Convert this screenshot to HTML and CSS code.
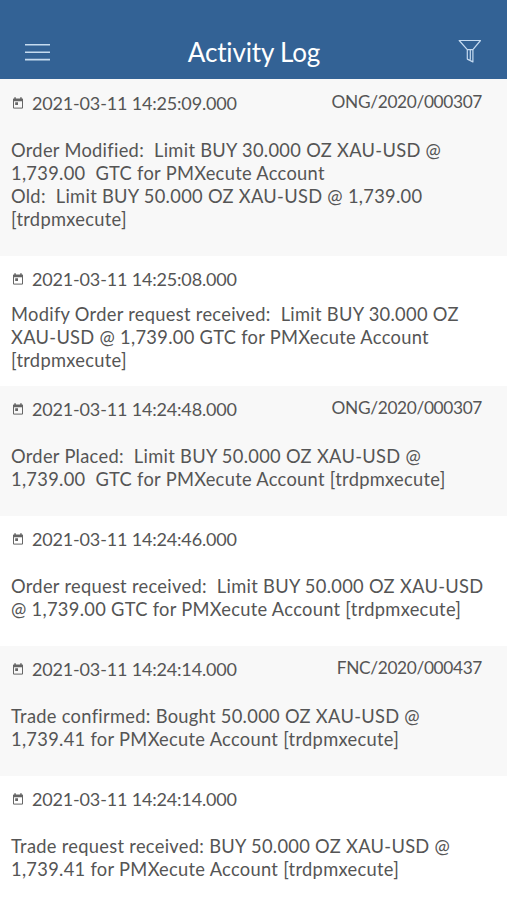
FILE: index.html
```html
<!DOCTYPE html>
<html lang="en">
<head>
    <meta charset="UTF-8">
    <meta name="viewport" content="width=device-width, initial-scale=1.0">
    <title>Activity Log</title>
    <link rel="stylesheet" href="styles.css">
</head>
<body>
    <svg class="icon-defs" width="0" height="0">
        <symbol id="calendar" viewBox="0 0 12 12">
            <path d="M1.5 2.2h9v8.9h-9z" fill="none" stroke="currentColor" stroke-width="1"/>
            <path d="M1 1.8h10v2.4H1zM2.3 .3h1.5V2H2.3zM8.2 .3h1.5V2H8.2zM3.2 5.3h2.8v2.8H3.2z" fill="currentColor"/>
        </symbol>
    </svg>
    <header class="header">
        <button class="menu-btn" aria-label="Menu">
            <svg width="26" height="20" viewBox="0 0 26 20" stroke="currentColor" stroke-width="1.6">
                <path d="M1 2.7h25M1 10.2h25M1 17.6h25"/>
            </svg>
        </button>
        <h1>Activity Log</h1>
        <button class="filter-btn" aria-label="Filter">
            <svg width="24" height="25" viewBox="0 0 24 25" fill="none" stroke="currentColor" stroke-width="1.2" stroke-linejoin="round">
                <path d="M1.2 1.5h21.3l-7.6 9.2v12.2l-5.6-2.8v-9.4zM9.3 10.7h5.6M12.3 10.7v10"/>
            </svg>
        </button>
    </header>
    <main class="log">
        <article class="entry first">
            <div class="entry-top">
                <svg class="calendar"><use href="#calendar"/></svg>
                <time>2021-03-11 14:25:09.000</time>
                <span class="ref">ONG/2020/000307</span>
            </div>
            <p>Order Modified:  Limit BUY 30.000 OZ XAU-USD @
1,739.00  GTC for PMXecute Account
Old:  Limit BUY 50.000 OZ XAU-USD @ 1,739.00
[trdpmxecute]</p>
        </article>
        <article class="entry compact">
            <div class="entry-top">
                <svg class="calendar"><use href="#calendar"/></svg>
                <time>2021-03-11 14:25:08.000</time>
            </div>
            <p>Modify Order request received:  Limit BUY 30.000 OZ
XAU-USD @ 1,739.00 GTC for PMXecute Account
[trdpmxecute]</p>
        </article>
        <article class="entry">
            <div class="entry-top">
                <svg class="calendar"><use href="#calendar"/></svg>
                <time>2021-03-11 14:24:48.000</time>
                <span class="ref">ONG/2020/000307</span>
            </div>
            <p>Order Placed:  Limit BUY 50.000 OZ XAU-USD @
1,739.00  GTC for PMXecute Account [trdpmxecute]</p>
        </article>
        <article class="entry">
            <div class="entry-top">
                <svg class="calendar"><use href="#calendar"/></svg>
                <time>2021-03-11 14:24:46.000</time>
            </div>
            <p>Order request received:  Limit BUY 50.000 OZ XAU-USD
@ 1,739.00 GTC for PMXecute Account [trdpmxecute]</p>
        </article>
        <article class="entry">
            <div class="entry-top">
                <svg class="calendar"><use href="#calendar"/></svg>
                <time>2021-03-11 14:24:14.000</time>
                <span class="ref">FNC/2020/000437</span>
            </div>
            <p>Trade confirmed: Bought 50.000 OZ XAU-USD @
1,739.41 for PMXecute Account [trdpmxecute]</p>
        </article>
        <article class="entry">
            <div class="entry-top">
                <svg class="calendar"><use href="#calendar"/></svg>
                <time>2021-03-11 14:24:14.000</time>
            </div>
            <p>Trade request received: BUY 50.000 OZ XAU-USD @
1,739.41 for PMXecute Account [trdpmxecute]</p>
        </article>
    </main>
</body>
</html>
```
FILE: styles.css
```css
* {
    box-sizing: border-box;
}

body {
    margin: 0;
    height: 900px;
    overflow: hidden;
    background: #fff;
    color: #555;
    font-family: Lato, "Liberation Sans", sans-serif;
    font-size: 18px;
    line-height: 23px;
}

.icon-defs {
    position: absolute;
}

.header {
    height: 79px;
    padding: 24px 25px 0 24px;
    display: flex;
    justify-content: space-between;
    align-items: center;
    background: #336295;
    color: #fff;
}

.header h1 {
    margin: 0;
    font-size: 26px;
    font-weight: 400;
    line-height: 32px;
    letter-spacing: -0.15px;
}

.header button {
    padding: 0;
    border: none;
    background: none;
    color: #c6dbf0;
}

.header svg {
    display: block;
}

.menu-btn {
    width: 26px;
}

.filter-btn {
    width: 24px;
    height: 25px;
}

.entry {
    height: 130px;
    padding: 12px 25px 0 11px;
}

.entry:nth-child(odd) {
    background: #f8f8f8;
}

.entry.first {
    height: 177px;
    padding-top: 13px;
}

.entry-top {
    height: 23px;
    display: flex;
    align-items: center;
}

.entry time {
    letter-spacing: -0.17px;
}

.calendar {
    width: 12px;
    height: 12px;
    margin: -1px 8px 0 1px;
    color: #666;
}

.ref {
    margin: -5px 0 0 auto;
    font-size: 17.3px;
    letter-spacing: -0.34px;
}

.entry p {
    margin: 24px 0 0;
    font-size: 18.3px;
    letter-spacing: 0.3px;
    white-space: pre;
}

.compact p {
    margin-top: 12px;
}
```
